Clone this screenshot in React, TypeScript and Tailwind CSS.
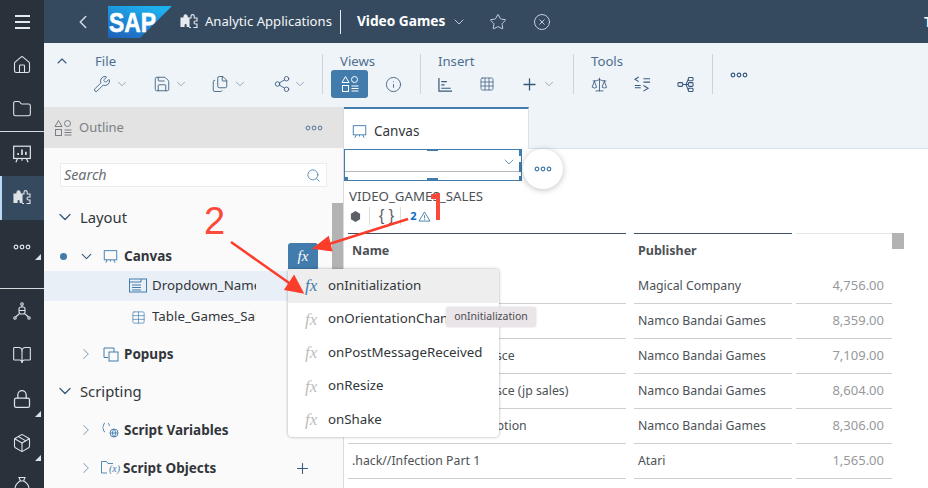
import type { ReactNode } from "react";
import { ChevronDown, ChevronLeft, ChevronRight, Home, Folder, Search, Star, CircleX, Plus, Info, Wrench, Save, Files, Share2, Scale, BookOpen, Lock, Package, Table, Grid3x3 } from "lucide-react";

const puzzle = (
  <svg viewBox="0 0 18 18" className="h-[18px] w-[18px]" fill="none" stroke="currentColor" strokeWidth="1.1">
    <path fill="currentColor" d="M1 5h3V3.500a1.600 1.600 0 0 1 3.200 0V5H9v8.500H7.200V12a1.600 1.600 0 0 0-3.200 0v1.500H1z" />
    <path d="M9 5h2V3.200a1.600 1.600 0 0 1 3.200 0V5H17v3h-1.500a1.500 1.500 0 0 0 0 3H17v3.500h-3.500M9 14.500h2" />
  </svg>
);

function Board({ className = "", bars }: { className?: string; bars?: boolean }) {
  return (
    <svg viewBox="0 0 18 18" className={className} fill="none" stroke="currentColor" strokeWidth="1.1">
      <rect x="1.500" y="2" width="15" height="11" />
      <path d="M5 13l-1.500 3.500M13 13l1.500 3.500M9 13v2" />
      {bars && <path d="M5.500 10V8M9 10V5M12.500 10V7" strokeWidth="1.500" />}
    </svg>
  );
}

function Dots({ className = "" }: { className?: string }) {
  return (
    <svg viewBox="0 0 18 6" className={`h-[6px] w-[18px] ${className}`} fill="none" stroke="currentColor" strokeWidth="1.2">
      <circle cx="3" cy="3" r="1.800" />
      <circle cx="9" cy="3" r="1.800" />
      <circle cx="15" cy="3" r="1.800" />
    </svg>
  );
}

function ShapesIcon({ className = "" }: { className?: string }) {
  return (
    <svg viewBox="0 0 18 18" className={`h-[18px] w-[18px] ${className}`} fill="none" stroke="currentColor" strokeWidth="1">
      <path d="M4.500 1.500 8 7.500H1z" />
      <circle cx="13.500" cy="4.500" r="3" />
      <rect x="1.500" y="10.500" width="6" height="6" />
      <path d="M10.500 11h7M10.500 13.500h7M10.500 16h7" />
    </svg>
  );
}

function RailItem({ children, tri, active }: { children: ReactNode; tri?: boolean; active?: boolean }) {
  return (
    <div className={`relative flex h-[44px] shrink-0 items-center justify-center text-[#dfe3e8] ${active ? "border-l-2 border-[#bcd9f5] bg-[#354a5f] pr-[2px]" : ""}`}>
      {children}
      {tri && <span className="absolute bottom-[4px] right-[3px] h-0 w-0 border-b-[6px] border-l-[6px] border-b-[#dfe3e8] border-l-transparent" />}
    </div>
  );
}

function Rail() {
  const ic = "h-[20px] w-[20px]";
  return (
    <div className="flex h-full w-[44px] shrink-0 flex-col bg-[#29313a]">
      <div className="flex h-[43px] shrink-0 flex-col items-center justify-center gap-[4px]">
        <span className="h-[2px] w-[15px] bg-[#e5e8ec]" />
        <span className="h-[2px] w-[15px] bg-[#e5e8ec]" />
        <span className="h-[2px] w-[15px] bg-[#e5e8ec]" />
      </div>
      <RailItem><Home className={ic} strokeWidth={1.3} /></RailItem>
      <RailItem><Folder className={ic} strokeWidth={1.3} /></RailItem>
      <div className="h-px shrink-0 bg-[#d5dadd]" />
      <RailItem><Board className={ic} bars /></RailItem>
      <RailItem active>{puzzle}</RailItem>
      <RailItem tri><Dots className="translate-y-[5px]" /></RailItem>
      <div className="h-[24px] shrink-0" />
      <div className="h-px shrink-0 bg-[#d5dadd]" />
      <RailItem>
        <svg viewBox="0 0 18 18" className="h-[18px] w-[18px]" fill="none" stroke="currentColor" strokeWidth="1.1">
          <circle cx="9" cy="2" r="1.300" />
          <rect x="6" y="5" width="6" height="7" rx="2" />
          <path d="M6 8.500h6M9 3.500V5M6 12l-3.500 3M12 12l3.500 3" />
          <circle cx="2" cy="16" r="1.200" />
          <circle cx="16" cy="16" r="1.200" />
        </svg>
      </RailItem>
      <RailItem><BookOpen className={ic} strokeWidth={1.3} /></RailItem>
      <RailItem tri><Lock className={ic} strokeWidth={1.5} /></RailItem>
      <RailItem tri><Package className={ic} strokeWidth={1.3} /></RailItem>
      <RailItem>
        <svg viewBox="0 0 18 18" className="h-[18px] w-[18px] -translate-y-[2px]" fill="none" stroke="currentColor" strokeWidth="1.1">
          <path d="M6 1.500h6L10.500 5h-3zM7 5c-3 2-5 5-5 8a3 3 0 0 0 3 3h8a3 3 0 0 0 3-3c0-3-2-6-5-8" />
        </svg>
      </RailItem>
    </div>
  );
}

function TopBar() {
  return (
    <div className="flex h-[43px] shrink-0 items-center bg-[#354a5f] text-white">
      <ChevronLeft className="ml-[28px] h-[22px] w-[22px] text-[#d5dde6]" strokeWidth={1.6} />
      <svg viewBox="0 0 64 32" className="ml-[14px] h-[32px] w-[64px]">
        <defs>
          <linearGradient id="sapg" x1="0" y1="1" x2="0.600" y2="0">
            <stop offset="0" stopColor="#1f5fb8" />
            <stop offset="1" stopColor="#1dafee" />
          </linearGradient>
        </defs>
        <polygon points="0,0 64,0 32,32 0,32" fill="url(#sapg)" />
        <text x="1" y="26" fontFamily="Liberation Sans" fontWeight="700" fontSize="27" stroke="#fff" strokeWidth="0.600" fill="#fff" textLength="47" lengthAdjust="spacingAndGlyphs">SAP</text>
      </svg>
      <span className="ml-[8px] text-[#e7ebef]">{puzzle}</span>
      <span className="ml-[7px] text-[13.100px] text-[#f4f6f8]">Analytic Applications</span>
      <span className="ml-[8px] h-[24px] w-px bg-[#e7ebef]" />
      <span className="ml-[16px] text-[13.700px] font-bold">Video Games</span>
      <ChevronDown className="ml-[6px] h-[16px] w-[16px] text-[#d5dde6]" strokeWidth={1.3} />
      <Star className="ml-[22px] h-[18px] w-[18px] text-[#d5dde6]" strokeWidth={1.2} />
      <CircleX className="ml-[26px] h-[18px] w-[18px] text-[#d5dde6]" strokeWidth={1.2} />
      <span className="ml-auto -mr-[4px] text-[14px] font-semibold">T</span>
    </div>
  );
}

function Caret({ className = "" }: { className?: string }) {
  return <ChevronDown className={`h-[14px] w-[14px] text-[#6a8cab] ${className}`} strokeWidth={1.2} />;
}

function Group({ label, width, sep = true, children }: { label: string; width: number; sep?: boolean; children: ReactNode }) {
  return (
    <div className={`flex h-[40px] flex-col ${sep ? "border-r border-[#cdd3d9]" : ""}`} style={{ width }}>
      <div className="h-[16px] shrink-0 pl-[17px] text-[13.200px] leading-[14px] text-[#4d6f8e]">{label}</div>
      <div className="flex h-[28px] shrink-0 items-center text-[#37597c]">{children}</div>
    </div>
  );
}

function Toolbar() {
  const ic = "h-[18px] w-[18px]";
  const sw = 1.15;
  return (
    <div className="flex h-[64px] shrink-0 bg-[#eff4f9] pt-[11px]">
      <div className="w-[34px] pl-[10px]">
        <ChevronDown className="mt-[-1px] h-[16px] w-[16px] rotate-180 text-[#37597c]" strokeWidth={1.6} />
      </div>
      <Group label="File" width={245}>
        <span className="ml-[15px] flex w-[60px] items-center gap-[4px]"><Wrench className={ic} strokeWidth={sw} /><Caret /></span>
        <span className="flex w-[58px] items-center gap-[3px]"><Save className={ic} strokeWidth={sw} /><Caret /></span>
        <span className="flex w-[62px] items-center gap-[4px]"><Files className={ic} strokeWidth={sw} /><Caret /></span>
        <span className="flex items-center gap-[2px]"><Share2 className={ic} strokeWidth={sw} /><Caret /></span>
      </Group>
      <Group label="Views" width={98}>
        <span className="ml-[8px] flex h-[28px] w-[37px] items-center justify-center rounded-[3px] bg-[#427cac] text-white">
          <ShapesIcon />
        </span>
        <Info className="ml-[17px] h-[17px] w-[17px]" strokeWidth={1.2} />
      </Group>
      <Group label="Insert" width={153}>
        <svg viewBox="0 0 16 16" className="ml-[17px] h-[15px] w-[15px]" fill="none" stroke="currentColor" strokeWidth="1.3"><path d="M1 1v14h14M3.500 5h6M3.500 8.500h3.500M3.500 12h10" /></svg>
        <Grid3x3 className="ml-[26px] h-[16px] w-[16px]" strokeWidth={1.1} />
        <Plus className="ml-[25px] h-[19px] w-[19px]" strokeWidth={1.6} />
        <Caret className="ml-[3px]" />
      </Group>
      <Group label="Tools" width={139}>
        <Scale className="ml-[17px] h-[17px] w-[17px]" strokeWidth={1.2} />
        <svg viewBox="0 0 18 18" className="ml-[26px] h-[17px] w-[17px]" fill="none" stroke="currentColor" strokeWidth="1.1"><path d="M5 1 1 3.500 5 6M1 10h6M1 12.500h6M10 10l5 3-5 3M10 3h7M10 6.500h7" /></svg>
        <svg viewBox="0 0 18 18" className="ml-[26px] h-[17px] w-[17px]" fill="none" stroke="currentColor" strokeWidth="1.1"><rect x="1" y="7" width="5" height="4" rx="1" /><rect x="12" y="1.500" width="5" height="3.500" rx="1" /><rect x="12" y="7" width="5" height="4" rx="1" /><rect x="12" y="13" width="5" height="3.500" rx="1" /><path d="M6 9h6M9.500 9 12 3.500M9.500 9 12 15" /></svg>
      </Group>
      <div className="ml-[17px] mt-[18px] text-[#37597c]"><Dots /></div>
    </div>
  );
}

function TreeRow({ h, indent, children, className = "" }: { h: number; indent: number; children: ReactNode; className?: string }) {
  return (
    <div className={`flex shrink-0 items-center ${className}`} style={{ height: h, paddingLeft: indent }}>
      {children}
    </div>
  );
}

function Outline() {
  const blue = "text-[#37597c]";
  const pale = "h-[18px] w-[18px] text-[#8fa9c2]";
  const bold = "text-[13.500px] font-bold text-[#32363a]";
  return (
    <div className="relative flex h-full w-[300px] shrink-0 flex-col border-r border-[#d9dde2] bg-[#fafafa]">
      <div className="flex h-[41px] shrink-0 items-center bg-[#e3e3e3] pl-[10px] pr-[20px] text-[#7b7f84]">
        <ShapesIcon className="h-[16px] w-[16px]" />
        <span className="ml-[7px] text-[13px]">Outline</span>
        <Dots className="ml-auto text-[#6f8aa5]" />
      </div>
      <div className="mx-[16px] mt-[15px] flex h-[24px] w-[267px] shrink-0 items-center border border-[#ececec] bg-white pl-[3px] pr-[5px]">
        <span className="text-[14.300px] italic text-[#6a6d70]">Search</span>
        <Search className="ml-auto h-[15px] w-[15px] text-[#427cac]" strokeWidth={1.3} />
      </div>
      <TreeRow h={38} indent={11} className="mt-[11px]">
        <ChevronDown className={`h-[20px] w-[20px] ${blue}`} strokeWidth={1.5} />
        <span className="ml-[5px] text-[14.800px] text-[#32363a]">Layout</span>
      </TreeRow>
      <TreeRow h={30} indent={16} className="mt-[5px]">
        <span className="h-[7px] w-[7px] rounded-full bg-[#427cac]" />
        <ChevronDown className={`ml-[11px] h-[17px] w-[17px] ${blue}`} strokeWidth={1.5} />
        <Board className="ml-[8px] h-[15px] w-[15px] text-[#427cac]" />
        <span className={`ml-[6px] ${bold}`}>Canvas</span>
      </TreeRow>
      <TreeRow h={30} indent={85} className="bg-[#e8eff6]">
        <svg viewBox="0 0 18 16" className="h-[16px] w-[18px] text-[#427cac]" fill="none" stroke="currentColor" strokeWidth="1"><rect x="0.500" y="1" width="17" height="13" /><path d="M1 4h11M12 1v3M3 7h9M3 9.500h9M3 12h9" /></svg>
        <span className="ml-[5px] w-[104px] overflow-hidden whitespace-nowrap text-[13.300px] text-[#32363a]">Dropdown_Name</span>
      </TreeRow>
      <TreeRow h={32} indent={87}>
        <Table className="h-[15px] w-[15px] text-[#427cac]" strokeWidth={1.1} />
        <span className="ml-[6px] w-[104px] overflow-hidden whitespace-nowrap text-[13.300px] text-[#32363a]">Table_Games_Sales</span>
      </TreeRow>
      <TreeRow h={32} indent={33} className="mt-[5px]">
        <ChevronRight className={pale} strokeWidth={1.4} />
        <svg viewBox="0 0 16 16" className="ml-[8px] h-[16px] w-[16px] text-[#427cac]" fill="none" stroke="currentColor" strokeWidth="1"><path d="M5 11.500H1V2h10v4" /><rect x="6" y="6" width="9" height="9" /></svg>
        <span className={`ml-[5px] ${bold}`}>Popups</span>
      </TreeRow>
      <TreeRow h={32} indent={11} className="mt-[5px]">
        <ChevronDown className={`h-[20px] w-[20px] ${blue}`} strokeWidth={1.5} />
        <span className="ml-[5px] text-[14.800px] text-[#32363a]">Scripting</span>
      </TreeRow>
      <TreeRow h={32} indent={33} className="mt-[7px]">
        <ChevronRight className={pale} strokeWidth={1.4} />
        <svg viewBox="0 0 18 16" className="ml-[7px] h-[16px] w-[18px] text-[#427cac]" fill="none" stroke="currentColor" strokeWidth="0.900"><path d="M3 1C1 1 2 5 .500 5.500 2 6 1 10 3 10M6 1c1 0 1 2 1.500 3" /><circle cx="12" cy="11" r="4" /><path d="M8 11h8M12 7c-2 2.500-2 5.500 0 8M12 7c2 2.500 2 5.500 0 8" /></svg>
        <span className={`ml-[4px] ${bold}`}>Script Variables</span>
      </TreeRow>
      <TreeRow h={32} indent={33} className="mt-[6px]">
        <ChevronRight className={pale} strokeWidth={1.4} />
        <svg viewBox="0 0 18 16" className="ml-[6px] h-[16px] w-[18px] text-[#427cac]" fill="none" stroke="currentColor" strokeWidth="0.900"><path d="M6 13H.500V1.500h5l1.500 2h5" /></svg>
        <span className="-ml-[10px] mr-[3px] font-['Liberation_Serif'] text-[10px] italic text-[#427cac]">(x)</span>
        <span className={bold}>Script Objects</span>
        <Plus className={`absolute left-[250px] h-[17px] w-[17px] ${blue}`} strokeWidth={1.5} />
      </TreeRow>
      {/* scrollbar */}
      <div className="absolute right-0 top-[96px] h-[70px] w-[11px] bg-[#b3b3b3]" />
    </div>
  );
}

const rows = [
  ["'98 Koshien", "Magical Company", "4,756.00"],
  [".hack//G.U. Vol.1//Rebirth", "Namco Bandai Games", "8,359.00"],
  [".hack//G.U. Vol.2//Reminisce", "Namco Bandai Games", "7,109.00"],
  [".hack//G.U. Vol.2//Reminisce (jp sales)", "Namco Bandai Games", "8,604.00"],
  [".hack//G.U. Vol.3//Redemption", "Namco Bandai Games", "8,306.00"],
  [".hack//Infection Part 1", "Atari", "1,565.00"],
];

function Handle({ className }: { className: string }) {
  return <span className={`absolute bg-[#427cac] ${className}`} />;
}

function CanvasArea() {
  return (
    <div className="flex h-full flex-1 flex-col bg-white">
      <div className="flex h-[42px] shrink-0 border-b border-[#d9e3ee] bg-[#eff4f9]">
        <div className="-mb-px flex w-[185px] items-center border-r border-t-[2px] border-r-[#d9e3ee] border-t-[#427cac] bg-white pl-[8px] pt-[5px]">
          <Board className="h-[15px] w-[15px] text-[#427cac]" />
          <span className="ml-[7px] text-[13.500px] text-[#32363a]">Canvas</span>
        </div>
      </div>
      <div className="relative flex shrink-0">
        <div className="relative h-[32px] w-[178px] border border-[#427cac]">
          <div className="flex h-[22px] items-center justify-end border-b border-[#b8b8b8] pr-[4px]">
            <ChevronDown className="h-[16px] w-[16px] translate-y-[1px] text-[#427cac]" strokeWidth={1.2} />
          </div>
          <Handle className="left-[82px] -top-px h-[2px] w-[11px]" />
          <Handle className="left-[82px] -bottom-[1px] h-[3px] w-[11px]" />
          <Handle className="-right-px top-0 h-[6px] w-[3px]" />
          <Handle className="-right-px top-[12px] h-[10px] w-[3px]" />
          <Handle className="-right-px bottom-0 h-[4px] w-[3px]" />
          <Handle className="-left-px bottom-0 h-[3px] w-[4px]" />
        </div>
        <div className="absolute left-[179px] top-0 flex h-[40px] w-[40px] items-center justify-center rounded-full bg-white text-[#427cac] shadow-[0_1px_6px_rgba(0,0,0,0.25)]">
          <Dots />
        </div>
      </div>
      <div className="ml-[5px] mt-[7px] text-[13.300px] leading-[16px] text-[#4c5156]">VIDEO_GAMES_SALES</div>
      <div className="ml-[5px] mt-[2px] flex h-[20px] items-center">
        <svg viewBox="0 0 12 12" className="ml-[1px] h-[11px] w-[11px] text-[#5d6166]" fill="currentColor"><path d="M6 0l5 3v6l-5 3-5-3V3z" /></svg>
        <span className="ml-[8px] h-[18px] w-px bg-[#dddddd]" />
        <span className="ml-[9px] font-['Liberation_Sans'] text-[16px] leading-none text-[#5d6166]">{"{ }"}</span>
        <span className="ml-[6px] h-[18px] w-px bg-[#dddddd]" />
        <span className="ml-[9px] text-[11px] font-bold text-[#0a6ed1]">2</span>
        <svg viewBox="0 0 14 12" className="ml-[2px] h-[11px] w-[13px] text-[#427cac]" fill="none" stroke="currentColor"><path d="M7 1l6 10H1zM7 4.500V8M7 9v1" /></svg>
      </div>
      <div className="relative mt-[7px] flex flex-col text-[12.300px]">
        <div className="flex h-[35px] items-center text-[12.500px]">
          <div className="ml-[4px] flex h-full w-[278px] items-center border-t-[1.500px] border-[#3f5163] pl-[4px] font-bold text-[#4c5156]">Name</div>
          <div className="ml-[8px] flex h-full w-[158px] items-center border-t-[1.500px] border-[#3f5163] pl-[4px] font-bold text-[#4c5156]">Publisher</div>
          <div className="ml-[4px] h-full w-[96px] border-t border-[#e6e6e6]" />
          <div className="h-[16px] w-[12px] self-start bg-[#b3b3b3]" />
        </div>
        {rows.map((r) => (
          <div key={r[2]} className="flex h-[35px] translate-y-[1px] text-[#4c5156]">
            <div className="ml-[4px] flex w-[278px] items-center border-b border-[#cfcfcf] pl-[4px]">{r[0]}</div>
            <div className="ml-[8px] flex w-[158px] items-center border-b border-[#cfcfcf] pl-[4px]">{r[1]}</div>
            <div className="ml-[4px] flex w-[96px] items-center justify-end border-b border-[#cfcfcf] pr-[8px] text-[13px] text-[#96999d]">{r[2]}</div>
          </div>
        ))}
      </div>
    </div>
  );
}

function FxMenu() {
  const items = ["onInitialization", "onOrientationChange", "onPostMessageReceived", "onResize", "onShake"];
  return (
    <>
      <div className="absolute left-[288px] top-[243px] flex h-[26px] w-[30px] items-center justify-center rounded-t-[3px] bg-[#427cac] font-['Liberation_Serif'] text-[15px] italic text-white">fx</div>
      <div className="absolute left-[288px] top-[269px] w-[211px] overflow-hidden rounded-[4px] bg-white shadow-[0_0_3px_rgba(0,0,0,0.35)]">
        {items.map((t, i) => (
          <div key={t} className={`flex h-[33.500px] items-center pl-[17px] ${i === 0 ? "bg-[#eeeeee]" : ""}`}>
            <span className={`w-[23px] font-['Liberation_Serif'] text-[17px] italic ${i === 0 ? "text-[#427cac]" : "text-[#bdbdbd]"}`}>fx</span>
            <span className="whitespace-nowrap text-[13.300px] text-[#32363a]">{t}</span>
          </div>
        ))}
      </div>
      <div className="absolute left-[446px] top-[307px] flex h-[20px] w-[90px] items-center justify-center rounded-[3px] bg-[#e9e5e9] text-[10.500px] text-[#4c4c50] shadow-[0_0_2px_rgba(0,0,0,0.2)]">onInitialization</div>
    </>
  );
}

function Annotations() {
  return (
    <>
      <svg viewBox="0 0 928 488" className="pointer-events-none absolute left-0 top-0 h-[488px] w-[928px]">
        <g stroke="#fb3d2c" strokeWidth="2.500" fill="#fb3d2c">
          <path d="M408 219 326 245" fill="none" />
          <path d="M315 248 328 238 331 250z" />
          <path d="M231 242 292 285" fill="none" />
          <path d="M302 292 286 289 294 277z" />
        </g>
      </svg>
      <span className="absolute left-[204px] top-[198px] font-['Liberation_Sans'] text-[38px] leading-[46px] text-[#fb4a3a]">2</span>
      <div className="absolute left-[431px] top-[194px] h-[5px] w-[7px] bg-[#fb4a3a]" />
      <div className="absolute left-[436px] top-[193px] h-[27px] w-[4px] bg-[#fb4a3a]" />
    </>
  );
}

export default function App() {
  return (
    <div className="relative flex h-[488px] w-[928px] overflow-hidden bg-white font-['Noto_Sans',sans-serif]">
      <Rail />
      <div className="flex h-full min-w-0 flex-1 flex-col">
        <TopBar />
        <Toolbar />
        <div className="flex min-h-0 flex-1">
          <Outline />
          <CanvasArea />
        </div>
      </div>
      <FxMenu />
      <Annotations />
    </div>
  );
}
